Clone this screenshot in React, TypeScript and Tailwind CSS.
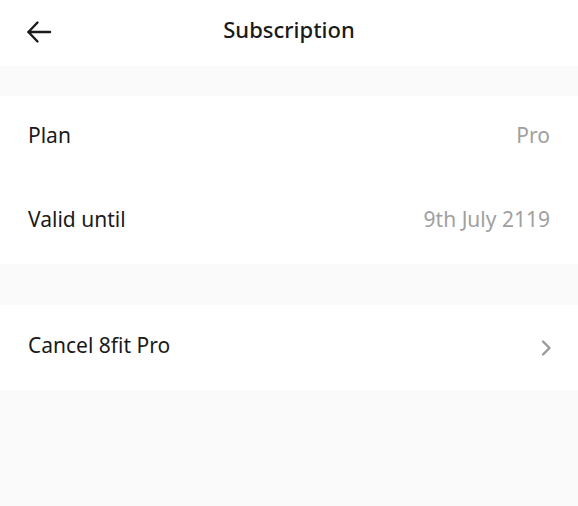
import React from "react";

export default function App() {
  return (
    <div className="w-[578px] h-[506px] bg-[#fafafa] flex flex-col" style={{ fontFamily: '"Noto Sans", "Open Sans", sans-serif' }}>
      <div className="h-[66px] bg-white relative flex items-center justify-center">
        <svg className="absolute left-[26px] top-[20px]" width="26" height="24" viewBox="0 0 26 24" fill="none" stroke="#1a1a1a" strokeWidth="2.4" strokeLinecap="round" strokeLinejoin="round">
          <path d="M24 12H2.5" />
          <path d="M11.5 2.5L2.5 12l9 9.5" />
        </svg>
        <span className="text-[22px] leading-[30px] font-medium text-[#1a1a1a] pb-[9px]">Subscription</span>
      </div>
      <div className="h-[30px]" />
      <div className="bg-white flex flex-col">
        <div className="h-[84px] flex items-center justify-between px-[28px] pb-[4px]">
          <span className="text-[21px] text-[#1a1a1a]">Plan</span>
          <span className="text-[21px] text-[#a0a0a0]">Pro</span>
        </div>
        <div className="h-[84px] flex items-center justify-between px-[28px] pb-[4px]">
          <span className="text-[21px] text-[#1a1a1a]">Valid until</span>
          <span className="text-[21px] text-[#a0a0a0]">9th July 2119</span>
        </div>
      </div>
      <div className="h-[41px]" />
      <div className="bg-white h-[85px] flex items-center justify-between pl-[28px] pr-[26px]">
        <span className="text-[21px] text-[#1a1a1a] pb-[4px]">Cancel 8fit Pro</span>
        <svg width="12" height="18" viewBox="0 0 12 18" fill="none" stroke="#9a9a9a" strokeWidth="2.4" strokeLinecap="round" strokeLinejoin="round">
          <path d="M3 2.5L9.5 9 3 15.5" />
        </svg>
      </div>
    </div>
  );
}
